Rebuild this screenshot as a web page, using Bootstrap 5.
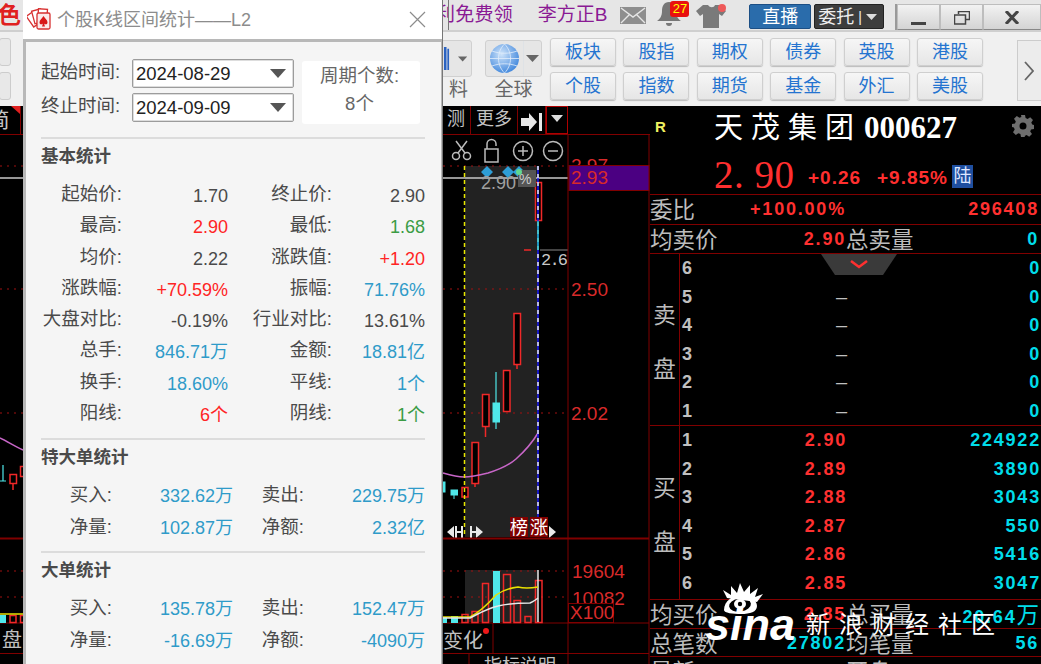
<!DOCTYPE html>
<html lang="zh-CN">

<head>
    <meta charset="UTF-8">
    <meta name="viewport" content="width=device-width, initial-scale=1.0">
    <title>个股K线区间统计</title>
    <link href="https://cdn.jsdelivr.net/npm/bootstrap@5.3.0/dist/css/bootstrap.min.css" rel="stylesheet">
    <style>
        html, body { width: 1041px; height: 664px; overflow: hidden; background: #000; }
        body { position: relative; font-family: "Liberation Sans", "Noto Sans CJK SC", sans-serif; }
        .app-shell { width: 1041px; height: 664px; }

        /* top strip */
        .top-strip { height: 32px; background: #e6e6e6; border-bottom: 2px solid #cfcfcf; flex: none; position: relative; overflow: hidden; }
        .brand-frag { width: 23px; margin-left: -2px; color: #e02020; font-weight: 700; font-size: 23px; line-height: 30px; }
        .ad-link { color: #8a1a94; font-size: 19px; line-height: 30px; white-space: nowrap; }
        .ad-one { margin-left: 415px; width: 102px; letter-spacing: .3px; }
        .ad-two { width: 83px; }
        .edge-line { position: absolute; left: 448px; top: 0; width: 1px; height: 31px; background: #777; }
        .top-icon { flex: none; display: block; }
        .bell-wrap { position: relative; width: 30px; height: 28px; margin-left: 11px; }
        .bell-count { position: absolute; left: 13px; top: 1px; width: 19px; height: 16px; background: #e81010; color: #ff0; font-size: 13px; line-height: 16px; text-align: center; border-radius: 3px; }
        .live-btn { width: 62px; height: 25px; margin-left: 20px; background: #2a6cab; color: #fff; border: 1px solid #1c4f85; font-size: 18px; line-height: 22px; padding: 0; border-radius: 2px; }
        .order-btn { width: 70px; height: 25px; margin-left: 3px; background: #3d3d3d; color: #eee; border: 1px solid #222; font-size: 18px; line-height: 22px; padding: 0 0 0 3px; border-radius: 2px; }
        .win-group { margin-left: 11px; height: 26px; border-left: 2px solid #999; }
        .win-btn { height: 26px; background: linear-gradient(#f2f2f2, #d4d4d4); border: 1px solid #bdbdbd; border-bottom-color: #888; padding: 0; border-radius: 0; color: #444; }

        /* tool strip */
        .tool-strip { height: 74px; background: #f0f0f0; flex: none; position: relative; overflow: hidden; }
        .stub-col { width: 11px; padding-top: 6px; flex: none; }
        .stub-key { width: 12px; margin-left: -1px; height: 28px; background: #e8e8e8; border: 1px solid #ccc; border-radius: 3px; margin-bottom: 6px; }
        .icon-tool { width: 57px; height: 37px; background: #e6e6e6; border: 1px solid #d0d0d0; border-radius: 3px; }
        .tool-label { font-size: 19px; color: #666; line-height: 24px; }
        .tool-left { margin-left: 420px; width: 41px; padding-top: 8px; }
        .tool-left-box { width: 41px; height: 37px; background: #e6e6e6; border: 1px solid #d0d0d0; border-radius: 3px; }
        .tool-globe { margin-left: 13px; width: 57px; padding-top: 8px; }
        .market-grid { margin-left: 8px; margin-top: 6px; display: grid; grid-template-columns: repeat(6, 66px); grid-auto-rows: 28px; column-gap: 7.4px; row-gap: 6px; }
        .market-key { padding: 0; background: linear-gradient(#f6f6f6, #e6e6e6); border: 1px solid #cfcfcf; border-radius: 3px; color: #2474d0; font-size: 18px; line-height: 24px; box-shadow: 0 1px 1px #bbb; }
        .next-key { position: absolute; left: 1017px; top: 8px; width: 30px; height: 61px; background: #ececec; border: 1px solid #ccc; padding: 0 6px 0 0; color: #666; border-radius: 0; }

        /* chart side */
        .chart-col { width: 650px; flex: none; background: #000; overflow: hidden; }
        .chart-tabs { height: 29px; border-bottom: 1px solid #800000; color: #c4c4c4; font-size: 18px; line-height: 27px; position: relative; overflow: hidden; }
        .tab-cell { flex: none; border-right: 1px solid #800000; height: 28px; text-align: center; white-space: nowrap; overflow: hidden; }
        .tab-cut { width: 21px; }
        .tab-cut span { margin-left: -22px; font-size: 21px; }
        .tab-flag { position: absolute; left: 11px; top: 0; width: 0; height: 0; border-top: 8px solid #e02020; border-left: 9px solid transparent; }
        .tab-a { width: 29px; margin-left: 421px; }
        .tab-b { width: 47px; }
        .tab-c { width: 28px; }
        .tab-d { width: 22px; outline: 1px solid #b00000; outline-offset: -1px; }
        .chart-svg { display: block; width: 650px; height: 529px; }
        .axis-num { font-family: "Liberation Sans", sans-serif; font-size: 19px; fill: #d82a2a; }
        .cjk-grey { font-family: "Noto Sans CJK SC", sans-serif; fill: #c0c0c0; }

        /* quote side */
        .quote-col { width: 391px; flex: none; background: #000; overflow: hidden; color: #c0c0c0; }
        .quote-head { height: 89px; border-bottom: 1px solid #800000; position: relative; }
        .r-flag { position: absolute; left: 5px; top: 13px; color: #f0f060; font-weight: 700; font-size: 15px; line-height: 16px; }
        .stock-name { position: absolute; left: 64px; top: 2px; color: #fff; font-size: 29px; line-height: 40px; letter-spacing: 8px; white-space: nowrap; }
        .stock-code { font-family: "Liberation Serif", serif; font-weight: 700; font-size: 31px; letter-spacing: 0; margin-left: 2px; }
        .gear-ico { position: absolute; left: 362px; top: 9px; }
        .price-line { position: absolute; left: 64px; top: 47px; color: #ff2f2f; white-space: nowrap; height: 40px; }
        .price-big { font-family: "Liberation Serif", serif; font-size: 39px; line-height: 44px; width: 94px; letter-spacing: .5px; }
        .price-sub { font-weight: 700; font-size: 19px; letter-spacing: 1px; line-height: 30px; margin-top: 10px; }
        .exch-tag { background: #1f4fa0; color: #dfe8ff; font-size: 18px; line-height: 23px; width: 21px; text-align: center; margin-left: 4px; margin-top: 12px; height: 23px; }
        .quote-row { display: grid; grid-template-columns: 196px 193px; border-bottom: 1px solid #800000; overflow: hidden; white-space: nowrap; }
        .h-30 { height: 30px; }
        .h-29 { height: 29px; }
        .h-28 { height: 28px; }
        .lbl-cjk { font-family: "Noto Sans CJK SC", sans-serif; font-size: 22.5px; line-height: 27px; color: #bcbcbc; font-weight: 400; letter-spacing: 0; }
        .num-bold { font-weight: 700; font-size: 18px; letter-spacing: 1.8px; line-height: 28px; }
        .quote-red { color: #ff3030; }
        .quote-cyan { color: #00dcea; }
        .ladder { border-bottom: 1px solid #800000; position: relative; }
        .ladder-sell { height: 172px; }
        .ladder-buy { height: 174px; }
        .ladder-side { width: 30px; flex: none; border-right: 1px solid #800000; font-size: 22.5px; line-height: 30px; color: #bcbcbc; font-family: "Noto Sans CJK SC", sans-serif; }
        .ladder-row { display: grid; grid-template-columns: 165px 194px; height: 28.5px; line-height: 28.5px; padding-left: 2px; }
        .ladder-row > div { line-height: 28.5px; }
        .lvl-no { position: relative; color: #c0c0c0; }
        .lvl-price { position: absolute; right: 0; top: 0; }
        .lvl-none { font-weight: 400; font-size: 20px; letter-spacing: 0; }
        .pull-tab { position: absolute; left: 171px; top: 0; }

        /* statistics dialog */
        .stat-dlg { left: 23px; top: 0; width: 419px; height: 664px; background: #fff; box-shadow: 1px 0 0 #777; overflow: hidden; color: #4a4a4a; }
        .dlg-title { height: 39px; background: #fff; position: relative; }
        .dlg-title-text { position: absolute; left: 34px; top: 6px; color: #8c8c8c; font-size: 18px; line-height: 28px; white-space: nowrap; }
        .dlg-logo { position: absolute; left: 4px; top: 7px; }
        .dlg-close { position: absolute; left: 386px; top: 11px; }
        .dlg-body { height: 625px; background: #f5f5f5; border-left: 3px solid #b8b8b8; border-top: 3px solid #b8b8b8; border-right: 1px solid #b8b8b8; padding: 17px 16px 0 15px; }
        .dlg-form-line { height: 29px; margin-bottom: 5px; }
        .dlg-form-lbl { width: 91px; font-size: 18.5px; line-height: 26px; color: #4a4a4a; white-space: nowrap; }
        .date-box { width: 162px; height: 29px; padding: 0 7px 0 3px; border: 1px solid #9c9c9c; border-radius: 2px; font-size: 18.5px; line-height: 27px; color: #222; background: #fff; box-shadow: 0 0 0 1px #ddd inset; }
        .date-caret { width: 0; height: 0; border-left: 8px solid transparent; border-right: 8px solid transparent; border-top: 9px solid #555; }
        .cycle-box { width: 118px; height: 63px; margin-left: 8px; margin-top: 2px; padding-right: 3px; background: #fff; border-radius: 3px; color: #666; font-size: 18.5px; line-height: 28px; text-align: center; padding-top: 1px; }
        .dlg-rule { border-top: 2px solid #dcdcdc; margin: 0; opacity: 1; }
        .dlg-section { font-weight: 700; font-size: 17.5px; line-height: 35px; color: #4a4a4a; }
        .kv-basic, .kv-order { display: grid; font-size: 18px; white-space: nowrap; }
        .kv-basic { grid-template-columns: 81px 106px 104px 93px; grid-auto-rows: 31.3px; margin-top: 5px; margin-bottom: 8.6px; }
        .kv-order { grid-template-columns: 71px 121px 71px 121px; grid-auto-rows: 32px; margin-top: 3px; margin-bottom: 9px; }
        .kv-k { text-align: right; line-height: 30px; color: #4a4a4a; font-size: 18.5px; }
        .kv-v { text-align: right; line-height: 34px; }
        .kv-order .kv-k { line-height: 34px; }
        .kv-order .kv-v { line-height: 36px; }
        .val-up { color: #ff2424; }
        .val-down { color: #3b9c45; }
        .val-blue { color: #2f9bc9; }
        .val-ink { color: #4a4a4a; }

        /* watermark */
        .sina-mark { left: 705px; top: 583px; width: 300px; height: 70px; color: #fff; }
        .sina-word { position: absolute; left: 0; top: 12px; font-family: "Liberation Sans", sans-serif; font-weight: 700; font-style: italic; font-size: 45px; line-height: 60px; letter-spacing: 0; }
        .sina-eye { position: absolute; left: 16px; top: 0; }
        .sina-cn { position: absolute; left: 101px; top: 22px; font-family: "Noto Sans CJK SC", sans-serif; font-size: 24px; line-height: 36px; letter-spacing: 9px; white-space: nowrap; }
    </style>
</head>

<body>
    <div class="app-shell d-flex flex-column">
        <!-- top strip -->
        <div class="top-strip d-flex align-items-start">
            <div class="brand-frag overflow-hidden">色</div>
            <div class="ad-link ad-one">利免费领</div>
            <div class="ad-link ad-two">李方正B</div>
            <svg class="top-icon" width="26" height="17" viewBox="0 0 26 17" style="margin-top:7px">
                <rect width="26" height="17" fill="#8e8e8e" />
                <path d="M1 1 13 10 25 1M1 16 10 7M25 16 16 7" fill="none" stroke="#e6e6e6" stroke-width="1.400" />
            </svg>
            <div class="bell-wrap">
                <svg class="top-icon" width="24" height="28" viewBox="0 0 24 28">
                    <path d="M12 2c-5 0-7 4-7 9 0 5-2 8-5 10h24c-3-2-5-5-5-10 0-5-2-9-7-9z" fill="#777" />
                    <path d="M9 23h6c0 2-1 3-3 3s-3-1-3-3z" fill="#777" />
                </svg>
                <div class="bell-count">27</div>
            </div>
            <svg class="top-icon" width="34" height="26" viewBox="0 0 34 26" style="margin-left:8px;margin-top:3px">
                <path d="M8 2 1 8l4 5 3-2v14h16V11l3 2 4-5-7-6h-4c-1 3-5 3-7 0z" fill="#7a7a7a" />
                <circle cx="27" cy="5" r="4" fill="#ee5a5a" />
            </svg>
            <button class="btn live-btn flex-none mt-1" type="button">直播</button>
            <button class="btn order-btn flex-none mt-1 d-flex align-items-center" type="button">
                <span>委托</span><span class="ms-1" style="font-size:14px">|</span>
                <svg class="ms-1" width="11" height="6" viewBox="0 0 11 6"><path d="M0 0h11L5.500 6z" fill="#ddd" /></svg>
            </button>
            <div class="win-group d-flex mt-1 flex-none">
                <button class="btn win-btn" type="button" style="width:43px"><svg width="15" height="14" viewBox="0 0 15 14"><rect y="11" width="15" height="3" fill="#444" /></svg></button>
                <button class="btn win-btn" type="button" style="width:43px"><svg width="16" height="14" viewBox="0 0 16 14"><path d="M4.500 3V.5h11v8H12M.5 4h11v9H.5z" fill="none" stroke="#444" stroke-width="1.500" /></svg></button>
                <button class="btn win-btn" type="button" style="width:58px"><svg width="14" height="13" viewBox="0 0 14 13"><path d="M1 0 13 13M13 0 1 13" stroke="#444" stroke-width="3" /></svg></button>
            </div>
            <div class="edge-line"></div>
        </div>

        <!-- tool strip -->
        <div class="tool-strip d-flex align-items-start">
            <div class="stub-col">
                <div class="stub-key"></div>
                <div class="stub-key"></div>
            </div>
            <div class="tool-left text-end">
                <div class="tool-left-box d-flex align-items-center justify-content-between pe-1">
                    <svg width="30" height="34" viewBox="0 0 30 34"><path d="M14 3h3v27h-3zM18 5h2v25h-2z" fill="#2a62c0" /></svg>
                    <svg width="11" height="6" viewBox="0 0 11 6"><path d="M0 0h11L5.500 6z" fill="#666" /></svg>
                </div>
                <div class="tool-label pe-1" style="margin-top:1px">料</div>
            </div>
            <div class="tool-globe text-center">
                <div class="icon-tool d-flex align-items-center">
                    <svg width="37" height="35" viewBox="0 0 37 35">
                        <defs>
                            <radialGradient id="globeFill" cx="40%" cy="35%" r="70%">
                                <stop offset="0" stop-color="#cfe4fa" />
                                <stop offset="1" stop-color="#3f86dc" />
                            </radialGradient>
                        </defs>
                        <circle cx="18.500" cy="17.500" r="14.500" fill="url(#globeFill)" />
                        <path d="M4 17.500h29M6 10c8 3 17 3 25 0M6 25c8-3 17-3 25 0M18.500 3c-8 8-8 21 0 29M18.500 3c8 8 8 21 0 29" fill="none" stroke="#e2eefb" stroke-width=".8" />
                    </svg>
                    <div class="border-start h-100 flex-grow-1 d-flex align-items-center justify-content-center">
                        <svg width="13" height="7" viewBox="0 0 13 7"><path d="M0 0h13L6.500 7z" fill="#666" /></svg>
                    </div>
                </div>
                <div class="tool-label" style="margin-top:1px">全球</div>
            </div>
            <div class="market-grid">
                <button class="btn market-key" type="button">板块</button>
                <button class="btn market-key" type="button">股指</button>
                <button class="btn market-key" type="button">期权</button>
                <button class="btn market-key" type="button">债券</button>
                <button class="btn market-key" type="button">英股</button>
                <button class="btn market-key" type="button">港股</button>
                <button class="btn market-key" type="button">个股</button>
                <button class="btn market-key" type="button">指数</button>
                <button class="btn market-key" type="button">期货</button>
                <button class="btn market-key" type="button">基金</button>
                <button class="btn market-key" type="button">外汇</button>
                <button class="btn market-key" type="button">美股</button>
            </div>
            <button class="btn next-key" type="button">
                <svg width="10" height="20" viewBox="0 0 10 20"><path d="M1 1 9 10 1 19" fill="none" stroke="#666" stroke-width="1.800" /></svg>
            </button>
        </div>

        <div class="d-flex flex-grow-1 overflow-hidden">
            <!-- chart side -->
            <div class="chart-col">
                <div class="chart-tabs d-flex">
                    <div class="tab-cell tab-cut"><span>简</span></div>
                    <div class="tab-flag"></div>
                    <div class="tab-cell tab-a">测</div>
                    <div class="tab-cell tab-b">更多</div>
                    <div class="tab-cell tab-c">
                        <svg width="22" height="20" viewBox="0 0 22 20" style="margin-top:3px"><path d="M0 6h8V1l8 9-8 9v-5H0zM18 1h3v18h-3z" fill="#e8e8e8" /></svg>
                    </div>
                    <div class="tab-cell tab-d">
                        <svg width="12" height="7" viewBox="0 0 12 7" style="margin-bottom:3px"><path d="M0 0h12L6 7z" fill="#ddd" /></svg>
                    </div>
                </div>
                <svg class="chart-svg" viewBox="0 135 650 529">
                    <!-- shaded selection -->
                    <rect x="465" y="166" width="73" height="371" fill="#222" />
                    <rect x="465" y="570" width="73" height="52" fill="#222" />

                    <!-- tool icons -->
                    <g fill="none" stroke="#bbb" stroke-width="1.500">
                        <circle cx="456" cy="156" r="3.500" /><circle cx="467" cy="156" r="3.500" />
                        <path d="M458 153 467 141M465 153 456 141" />
                        <rect x="485" y="149" width="13" height="13" />
                        <path d="M487 149v-5a4.500 4.500 0 0 1 9 0v2" />
                        <circle cx="523" cy="151" r="9.500" /><path d="M518 151h10M523 146v10" />
                        <circle cx="553" cy="151" r="9.500" /><path d="M548 151h10" />
                    </g>

                    <!-- grid dots -->
                    <g stroke="#a01010" stroke-dasharray="2 5">
                        <path d="M0 166H23M443 166H568M0 289H23M443 289H568M0 413H23M443 413H568M0 571H23M443 571H568M0 597H23M443 597H568" />
                    </g>
                    <path d="M0 178H23M443 178H568" stroke="#c8c8c8" stroke-width="1.500" />

                    <!-- candles -->
                    <g fill="#000" stroke="#f02828" stroke-width="1.500">
                        <path d="M517 364v5M485.500 426v11M475 483v4" />
                        <rect x="535.500" y="182.500" width="6" height="38" />
                        <rect x="514" y="313.500" width="6.500" height="51" />
                        <rect x="503.500" y="370.500" width="6.500" height="41" />
                        <rect x="482.500" y="394.500" width="6.500" height="32" />
                        <rect x="472" y="442.500" width="6.500" height="41" />
                        <rect x="462" y="487.500" width="6" height="9.500" />
                        <rect x="10" y="474.500" width="6.500" height="9" />
                        <path d="M13 484v6" />
                        <rect x="20.500" y="466.500" width="6" height="10" />
                        <path d="M524 250h7" />
                    </g>
                    <g fill="#4fe8ea" stroke="#4fe8ea">
                        <path d="M496 372v57" stroke-width="1.200" />
                        <rect x="493" y="403" width="6.500" height="19" />
                        <rect x="451" y="490" width="6.500" height="5" /><path d="M454 495v4" />
                        <rect x="442" y="482" width="3" height="10" /><path d="M3 465v16M0 481h6" stroke-width="1.200" />
                    </g>
                    <path d="M540 250H568" stroke="#888" />
                    <text x="541" y="265" font-family="Liberation Mono, monospace" font-size="17" fill="#c8c8c8" textLength="27">2.6</text>

                    <!-- average curve -->
                    <path d="M443 473C450 475 458 477 464 477 472 477 480 475 488 473 498 470 508 466 516 459 525 451 532 443 538 433" fill="none" stroke="#c866c8" stroke-width="1.500" />
                    <path d="M0 438C8 442 16 447 23 450" fill="none" stroke="#c866c8" stroke-width="1.500" />

                    <!-- selection edges -->
                    <path d="M464.500 166V537" stroke="#e8e800" stroke-width="1.500" stroke-dasharray="4 3" />
                    <path d="M538 166V537" stroke="#1a1aff" stroke-width="1.500" />
                    <path d="M538 166V537" stroke="#f0f0f0" stroke-width="1.500" stroke-dasharray="4 4" />
                    <path d="M538 221V250" stroke="#20c0c0" stroke-width="1.500" />

                    <!-- top markers -->
                    <g fill="#2e9ed6">
                        <path d="M487 166l6 6-6 6-6-6zM508 166l6 6-6 6-6-6zM519 166l6 6-6 6-6-6z" />
                    </g>
                    <text x="481" y="189" font-size="18" fill="#a0a0a0" font-family="Liberation Sans, sans-serif">2.90</text>
                    <rect x="518" y="170" width="18" height="17" fill="#555" />
                    <text x="519" y="184" font-size="14" fill="#ccc" font-family="Liberation Sans, sans-serif">%</text>
                    <circle cx="519" cy="172" r="3" fill="#60d890" />

                    <!-- event tags -->
                    <rect x="510" y="517" width="18" height="20" fill="#800000" />
                    <rect x="530" y="517" width="18" height="20" fill="#800000" />
                    <text x="510" y="534" font-size="18" fill="#fff" font-family="Noto Sans CJK SC, sans-serif">榜</text>
                    <text x="530" y="534" font-size="18" fill="#fff" font-family="Noto Sans CJK SC, sans-serif">涨</text>
                    <g fill="#e8e8e8">
                        <path d="M447 532l7-6v12zM455 526h2v12h-2zM461 526h2v12h-2zM457 531h4v2h-4z" />
                        <path d="M483 532l-7-6v12zM470 526h2v12h-2zM472 531h4v2h-4z" />
                        <path d="M556 532l-7-6v12z" />
                    </g>

                    <!-- panel lines -->
                    <path d="M568 135V653M649 135V664M0 623H649M0 653.500H649M469 654V664M568 654V664M493 623V653" stroke="#800000" fill="none" />
                    <path d="M0 538.500H649" stroke="#800000" stroke-width="2" />
                    <path d="M443 134.500H568M0 134.500H23" stroke="#800000" />

                    <!-- axis -->
                    <text class="axis-num" x="571" y="172">2.97</text>
                    <rect x="569" y="165.500" width="80" height="25" fill="#4b0082" stroke="#800000" />
                    <text class="axis-num" x="571" y="184">2.93</text>
                    <text class="axis-num" x="571" y="296">2.50</text>
                    <text class="axis-num" x="571" y="420">2.02</text>
                    <text class="axis-num" x="572" y="578">19604</text>
                    <text class="axis-num" x="572" y="605">10082</text>
                    <rect x="568.500" y="603.500" width="45" height="19" fill="#000" stroke="#800000" />
                    <text class="axis-num" x="570" y="619">X100</text>

                    <!-- volume -->
                    <g fill="#4fe8ea">
                        <rect x="443" y="617" width="4" height="6" />
                        <rect x="451" y="616" width="7" height="7" />
                        <rect x="493" y="571" width="7" height="52" />
                        <rect x="0" y="615" width="6" height="8" />
                    </g>
                    <g fill="none" stroke="#f02828" stroke-width="1.500">
                        <rect x="462" y="614.500" width="6" height="8" />
                        <rect x="472" y="611.500" width="6" height="11" />
                        <rect x="482.500" y="583.500" width="6" height="39" />
                        <rect x="503.500" y="574.500" width="7" height="48" />
                        <rect x="514" y="600.500" width="6.500" height="22" />
                        <rect x="525" y="616.500" width="6" height="6" />
                        <rect x="535.500" y="580.500" width="6.500" height="42" />
                        <rect x="10" y="615.500" width="6" height="7" />
                        <rect x="20.500" y="615.500" width="6" height="7" />
                    </g>
                    <path d="M538 570V622" stroke="#e8e8e8" stroke-width="1.500" />
                    <path d="M443 617H470C478 613 488 604 496 595 503 590 510 588 518 587 526 589 532 588 538 587" fill="none" stroke="#e8e000" stroke-width="1.500" />
                    <path d="M443 618H470C478 614 488 608 498 606 510 603 524 603 530 603 534 601 536 600 538 598" fill="none" stroke="#e8e8e8" stroke-width="1.500" />
                    <path d="M0 614H23" stroke="#e8e000" stroke-width="1.500" />

                    <!-- bottom labels -->
                    <text class="cjk-grey" x="2" y="647" font-size="20">盘</text>
                    <text class="cjk-grey" x="443" y="648" font-size="20">变化</text>
                    <circle cx="486" cy="631" r="3" fill="#f01818" />
                    <text class="cjk-grey" x="484" y="672" font-size="18">指标说明</text>
                </svg>
            </div>

            <!-- quote side -->
            <div class="quote-col">
                <div class="quote-head">
                    <div class="r-flag">R</div>
                    <div class="stock-name">天茂集团<span class="stock-code">000627</span></div>
                    <svg class="gear-ico" width="22" height="22" viewBox="0 0 22 22">
                        <path fill="#6e6e6e" fill-rule="evenodd" d="M9 0h4l.6 3 2 .9L18.200 2.200 21 5l-1.700 2.600.9 2L22 10v4l-3 .5-.8 2 1.800 2.500-2.800 2.800-2.600-1.700-2 .8L13 22H9l-.6-3-2-.8L3.800 20 1 17.200l1.700-2.600-.8-2L0 12V9l3-.6.800-2L2 3.800 4.800 1l2.600 1.800 2-.9zM11 7.500a3.500 3.500 0 1 0 0 7 3.500 3.500 0 0 0 0-7z" />
                    </svg>
                    <div class="price-line d-flex">
                        <div class="price-big">2. 90</div>
                        <div class="price-sub" style="width:69px">+0.26</div>
                        <div class="price-sub">+9.85%</div>
                        <div class="exch-tag">陆</div>
                    </div>
                </div>

                <div class="quote-row h-30">
                    <div class="position-relative"><span class="lbl-cjk">委比</span><span class="num-bold quote-red position-absolute end-0">+100.00%</span></div>
                    <div class="num-bold quote-red text-end">296408</div>
                </div>
                <div class="quote-row h-29">
                    <div class="position-relative"><span class="lbl-cjk">均卖价</span><span class="num-bold quote-red position-absolute end-0">2.90</span></div>
                    <div class="d-flex justify-content-between"><span class="lbl-cjk">总卖量</span><span class="num-bold quote-cyan">0</span></div>
                </div>

                <div class="ladder ladder-sell d-flex">
                    <div class="ladder-side d-flex flex-column align-items-center justify-content-center gap-4"><span>卖</span><span>盘</span></div>
                    <div class="flex-grow-1">
                        <div class="ladder-row num-bold"><div class="lvl-no">6</div><div class="quote-cyan text-end">0</div></div>
                        <div class="ladder-row num-bold"><div class="lvl-no">5<span class="lvl-price lvl-none">–</span></div><div class="quote-cyan text-end">0</div></div>
                        <div class="ladder-row num-bold"><div class="lvl-no">4<span class="lvl-price lvl-none">–</span></div><div class="quote-cyan text-end">0</div></div>
                        <div class="ladder-row num-bold"><div class="lvl-no">3<span class="lvl-price lvl-none">–</span></div><div class="quote-cyan text-end">0</div></div>
                        <div class="ladder-row num-bold"><div class="lvl-no">2<span class="lvl-price lvl-none">–</span></div><div class="quote-cyan text-end">0</div></div>
                        <div class="ladder-row num-bold"><div class="lvl-no">1<span class="lvl-price lvl-none">–</span></div><div class="quote-cyan text-end">0</div></div>
                    </div>
                    <svg class="pull-tab" width="76" height="22" viewBox="0 0 76 22">
                        <path d="M0 0H76L62 21H14z" fill="#3a3a3a" />
                        <path d="M30 7l8 6 8-6" fill="none" stroke="#ff3030" stroke-width="2.500" />
                    </svg>
                </div>

                <div class="ladder ladder-buy d-flex">
                    <div class="ladder-side d-flex flex-column align-items-center justify-content-center gap-4"><span>买</span><span>盘</span></div>
                    <div class="flex-grow-1">
                        <div class="ladder-row num-bold"><div class="lvl-no">1<span class="lvl-price quote-red">2.90</span></div><div class="quote-cyan text-end">224922</div></div>
                        <div class="ladder-row num-bold"><div class="lvl-no">2<span class="lvl-price quote-red">2.89</span></div><div class="quote-cyan text-end">3890</div></div>
                        <div class="ladder-row num-bold"><div class="lvl-no">3<span class="lvl-price quote-red">2.88</span></div><div class="quote-cyan text-end">3043</div></div>
                        <div class="ladder-row num-bold"><div class="lvl-no">4<span class="lvl-price quote-red">2.87</span></div><div class="quote-cyan text-end">550</div></div>
                        <div class="ladder-row num-bold"><div class="lvl-no">5<span class="lvl-price quote-red">2.86</span></div><div class="quote-cyan text-end">5416</div></div>
                        <div class="ladder-row num-bold"><div class="lvl-no">6<span class="lvl-price quote-red">2.85</span></div><div class="quote-cyan text-end">3047</div></div>
                    </div>
                </div>

                <div class="quote-row h-29">
                    <div class="position-relative"><span class="lbl-cjk">均买价</span><span class="num-bold quote-red position-absolute end-0">2.85</span></div>
                    <div class="d-flex justify-content-between"><span class="lbl-cjk">总买量</span><span class="num-bold quote-cyan">20.64<span class="lbl-cjk quote-cyan">万</span></span></div>
                </div>
                <div class="quote-row h-28">
                    <div class="position-relative"><span class="lbl-cjk">总笔数</span><span class="num-bold quote-cyan position-absolute end-0">27802</span></div>
                    <div class="d-flex justify-content-between"><span class="lbl-cjk">均笔量</span><span class="num-bold quote-cyan">56</span></div>
                </div>
                <div class="quote-row">
                    <div class="position-relative"><span class="lbl-cjk">最新</span><span class="num-bold quote-red position-absolute end-0">2.90</span></div>
                    <div class="d-flex justify-content-between"><span class="lbl-cjk">开盘</span><span class="num-bold quote-red">2.67</span></div>
                </div>
            </div>
        </div>
    </div>

    <!-- statistics dialog -->
    <div class="stat-dlg position-absolute">
        <div class="dlg-title">
            <svg class="dlg-logo" width="25" height="23" viewBox="0 0 25 23">
                <g fill="#fff" stroke="#d83030" stroke-width="1.300">
                    <rect x="2" y="6" width="9" height="13" transform="rotate(-35 6 12)" />
                    <rect x="6" y="3" width="9" height="13" transform="rotate(-15 10 9)" />
                    <rect x="11" y="2" width="9" height="13" transform="rotate(5 15 8)" />
                    <rect x="10" y="6" width="13" height="16" rx="1.500" fill="#fbeaea" />
                </g>
                <path d="M16.500 9c2 3 4 4 4 6.500 0 2-2.500 2.500-3.500 1l1 3h-3l1-3c-1 1.500-3.500 1-3.500-1C12.500 13 14.500 12 16.500 9z" fill="#d81818" />
            </svg>
            <div class="dlg-title-text">个股K线区间统计——L2</div>
            <svg class="dlg-close" width="17" height="17" viewBox="0 0 17 17"><path d="M1 1 16 16M16 1 1 16" stroke="#8c8c8c" stroke-width="1.200" /></svg>
        </div>
        <div class="dlg-body">
            <div class="d-flex">
                <div>
                    <div class="dlg-form-line d-flex">
                        <div class="dlg-form-lbl">起始时间:</div>
                        <div class="date-box d-flex align-items-center justify-content-between"><span>2024-08-29</span><span class="date-caret"></span></div>
                    </div>
                    <div class="dlg-form-line d-flex">
                        <div class="dlg-form-lbl">终止时间:</div>
                        <div class="date-box d-flex align-items-center justify-content-between"><span>2024-09-09</span><span class="date-caret"></span></div>
                    </div>
                </div>
                <div class="cycle-box">周期个数:<br>8个</div>
            </div>
            <hr class="dlg-rule" style="margin-top:10px">
            <div class="dlg-section">基本统计</div>
            <div class="kv-basic">
                <div class="kv-k">起始价:</div><div class="kv-v val-ink">1.70</div><div class="kv-k">终止价:</div><div class="kv-v val-ink">2.90</div>
                <div class="kv-k">最高:</div><div class="kv-v val-up">2.90</div><div class="kv-k">最低:</div><div class="kv-v val-down">1.68</div>
                <div class="kv-k">均价:</div><div class="kv-v val-ink">2.22</div><div class="kv-k">涨跌值:</div><div class="kv-v val-up">+1.20</div>
                <div class="kv-k">涨跌幅:</div><div class="kv-v val-up">+70.59%</div><div class="kv-k">振幅:</div><div class="kv-v val-blue">71.76%</div>
                <div class="kv-k">大盘对比:</div><div class="kv-v val-ink">-0.19%</div><div class="kv-k">行业对比:</div><div class="kv-v val-ink">13.61%</div>
                <div class="kv-k">总手:</div><div class="kv-v val-blue">846.71万</div><div class="kv-k">金额:</div><div class="kv-v val-blue">18.81亿</div>
                <div class="kv-k">换手:</div><div class="kv-v val-blue">18.60%</div><div class="kv-k">平线:</div><div class="kv-v val-blue">1个</div>
                <div class="kv-k">阳线:</div><div class="kv-v val-up">6个</div><div class="kv-k">阴线:</div><div class="kv-v val-down">1个</div>
            </div>
            <hr class="dlg-rule">
            <div class="dlg-section">特大单统计</div>
            <div class="kv-order">
                <div class="kv-k">买入:</div><div class="kv-v val-blue">332.62万</div><div class="kv-k">卖出:</div><div class="kv-v val-blue">229.75万</div>
                <div class="kv-k">净量:</div><div class="kv-v val-blue">102.87万</div><div class="kv-k">净额:</div><div class="kv-v val-blue">2.32亿</div>
            </div>
            <hr class="dlg-rule">
            <div class="dlg-section">大单统计</div>
            <div class="kv-order">
                <div class="kv-k">买入:</div><div class="kv-v val-blue">135.78万</div><div class="kv-k">卖出:</div><div class="kv-v val-blue">152.47万</div>
                <div class="kv-k">净量:</div><div class="kv-v val-blue">-16.69万</div><div class="kv-k">净额:</div><div class="kv-v val-blue">-4090万</div>
            </div>
            <hr class="dlg-rule">
        </div>
    </div>

    <!-- watermark -->
    <div class="sina-mark position-absolute">
        <svg class="sina-eye" width="44" height="32" viewBox="0 0 44 32">
            <path d="M3 27C3 18 12 12 20 12s16 5 16 11c0 6-7 8-16 8-8 0-17-1-17-4z" fill="#fff" />
            <ellipse cx="19" cy="22" rx="11" ry="6.500" fill="#000" transform="rotate(-8 19 22)" />
            <ellipse cx="19" cy="21" rx="6" ry="5" fill="#fff" />
            <circle cx="19" cy="21" r="2.200" fill="#000" />
            <path d="M6 15 2 7 10 12 10 3 16 10 19 0 23 9 29 2 29 11 37 5 34 14 42 11 36 19z" fill="#fff" />
        </svg>
        <div class="sina-word">sina</div>
        <div class="sina-cn">新浪财经社区</div>
    </div>
</body>

</html>
